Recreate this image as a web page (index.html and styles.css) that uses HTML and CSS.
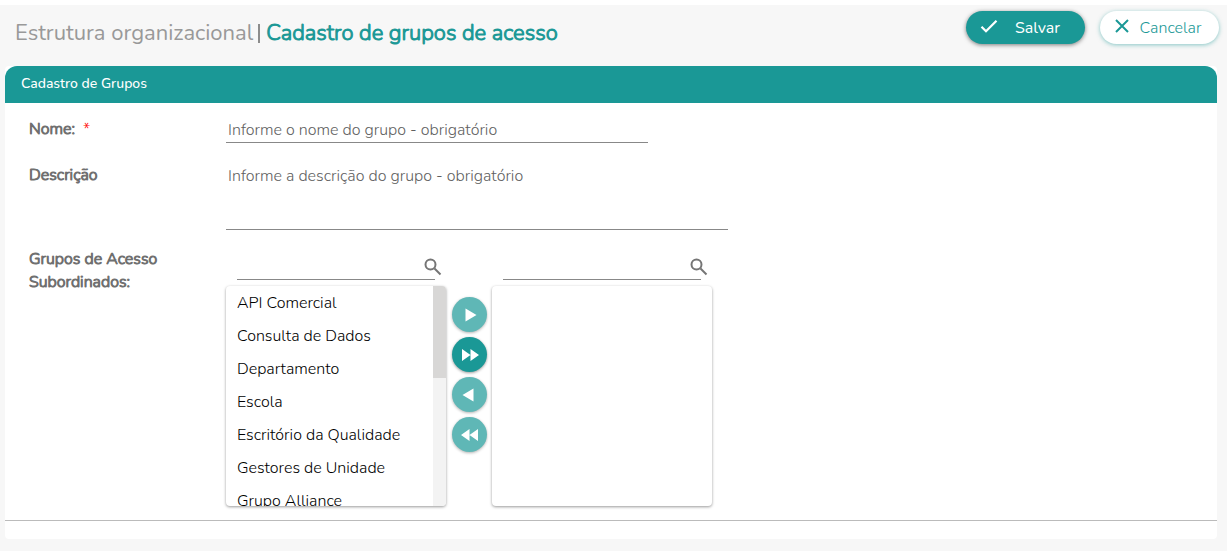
FILE: index.html
```html
<!DOCTYPE html>
<html lang="pt-BR">
<head>
<meta charset="utf-8">
<meta name="viewport" content="width=device-width, initial-scale=1">
<title>Cadastro de grupos de acesso</title>
<link rel="stylesheet" href="styles.css">
</head>
<body>
<header class="topbar">
  <h1 class="title"><span class="title-area">Estrutura organizacional</span><span class="title-sep"></span><span class="title-page">Cadastro de grupos de acesso</span></h1>
  <div class="actions">
    <button class="btn btn-primary" type="submit" form="group-form"><svg class="btn-icon" viewBox="0 0 24 24" aria-hidden="true"><path d="M2 13l6 6L22 5" /></svg><span class="btn-text">Salvar</span></button>
    <button class="btn btn-plain" type="button"><svg class="btn-icon" viewBox="0 0 24 24" aria-hidden="true"><path d="M3 3l18 18M21 3L3 21" /></svg><span class="btn-text">Cancelar</span></button>
  </div>
</header>
<main class="card">
  <h2 class="card-title">Cadastro de Grupos</h2>
  <form class="form" id="group-form">
    <div class="row row-name">
      <label class="label" for="name">Nome: <span class="required">*</span></label>
      <input class="field field-name" id="name" type="text" placeholder="Informe o nome do grupo - obrigatório">
    </div>
    <div class="row row-description">
      <label class="label" for="description">Descrição</label>
      <textarea class="field field-description" id="description" placeholder="Informe a descrição do grupo - obrigatório"></textarea>
    </div>
    <div class="row">
      <span class="label" id="groups-label">Grupos de Acesso Subordinados:</span>
      <div class="picker" role="group" aria-labelledby="groups-label">
        <div class="column">
          <div class="search"><input class="search-input" type="text" aria-label="Buscar grupos disponíveis"><svg class="search-icon" viewBox="0 0 18 18" aria-hidden="true"><circle cx="6.500" cy="6.500" r="5"/><path d="M10.500 10.500l6 6"/></svg></div>
          <div class="box">
            <ul class="list">
              <li class="item">API Comercial</li>
              <li class="item">Consulta de Dados</li>
              <li class="item">Departamento</li>
              <li class="item">Escola</li>
              <li class="item">Escritório da Qualidade</li>
              <li class="item">Gestores de Unidade</li>
              <li class="item">Grupo Alliance</li>
            </ul>
            <div class="track"><div class="thumb"></div></div>
          </div>
        </div>
        <div class="moves">
          <button class="move" type="button" aria-label="Adicionar" disabled><svg class="move-icon" viewBox="0 0 20 20"><path d="M5.500 3.500v13L16.500 10z"/></svg></button>
          <button class="move" type="button" aria-label="Adicionar todos"><svg class="move-icon" viewBox="0 0 20 20"><path d="M2 4v12l8.500-6zM10.500 4v12L19 10z"/></svg></button>
          <button class="move" type="button" aria-label="Remover" disabled><svg class="move-icon" viewBox="0 0 20 20"><path d="M13.500 3.500v13L2.500 10z"/></svg></button>
          <button class="move" type="button" aria-label="Remover todos" disabled><svg class="move-icon" viewBox="0 0 20 20"><path d="M9.500 4v12L1 10zM18 4v12L9.500 10z"/></svg></button>
        </div>
        <div class="column">
          <div class="search"><input class="search-input" type="text" aria-label="Buscar grupos selecionados"><svg class="search-icon" viewBox="0 0 18 18" aria-hidden="true"><circle cx="6.500" cy="6.500" r="5"/><path d="M10.500 10.500l6 6"/></svg></div>
          <div class="box"><ul class="list"></ul></div>
        </div>
      </div>
    </div>
  </form>
  <footer class="card-footer"></footer>
</main>
</body>
</html>
```
FILE: styles.css
```css
* { box-sizing: border-box; }
html { background: #f7f7f7; }
body {
  margin: 0;
  border-top: 5px solid #fff;
  background: #f7f7f7;
  color: #212529;
  font-family: Nunito, Lato, "Open Sans", sans-serif;
  font-size: 16px;
  font-weight: 300;
  line-height: 23px;
}
button, input, textarea { font: inherit; }
.topbar {
  display: flex;
  justify-content: space-between;
  align-items: flex-start;
  height: 61px;
  padding: 6px 8px 0 15px;
}
.title {
  display: flex;
  align-items: center;
  margin: 6px 0 0;
  font-size: 22px;
  font-weight: 400;
  line-height: 32px;
}
.title-area { color: #999; }
.title-sep { width: 2px; height: 19px; margin: 0 6px 0 5px; background: #8c8c8c; }
.title-page { color: #1a9896; font-weight: 350; -webkit-text-stroke: 1px #1a9896; }
.actions { display: flex; gap: 15px; }
.btn {
  display: flex;
  align-items: center;
  width: 119px;
  height: 33px;
  padding: 0 8px 0 14px;
  border: 0;
  border-radius: 17px;
}
.btn-icon { width: 18px; height: 18px; margin-bottom: 4px; fill: none; stroke: currentColor; stroke-width: 3; }
.btn-text { flex: 1; padding-top: 1px; text-align: center; }
.btn-primary { background: #1a9896; color: #fff; font-weight: 400; box-shadow: 0 1px 4px rgba(0, 0, 0, .5); }
.btn-plain { background: #fff; color: #1a9896; box-shadow: 0 1px 4px rgba(26, 152, 150, .5); }
.btn-plain .btn-icon { width: 16px; height: 16px; }
.card { margin: 0 10px 12px 5px; background: #fff; border-radius: 4px; }
.card-title {
  margin: 0;
  padding: 6px 16px 8px;
  border-radius: 12px 12px 0 0;
  background: #1a9896;
  color: #fff;
  font-size: 14px;
  font-weight: 500;
  line-height: 23px;
}
.form { padding: 14px 24px; }
.row { display: grid; grid-template-columns: 197px 1fr; align-items: start; }
.row-name { height: 46px; }
.row-description { height: 84px; }
.label { padding: 1px 40px 0 0; color: #707070; -webkit-text-stroke: 1px #707070; }
.required { margin-left: 4px; color: #f00; -webkit-text-stroke: 0; }
.field {
  display: block;
  padding: 2px;
  border: 0;
  border-bottom: 1px solid #888;
  border-radius: 0;
  background: transparent;
  resize: none;
}
.field::placeholder { color: #606060; opacity: 1; }
.field-name { width: 422px; height: 26px; }
.field-description { width: 502px; height: 67px; }
.picker { display: flex; align-items: flex-start; }
.column { width: 220px; }
.search { display: flex; align-items: center; height: 33px; margin-bottom: 6px; padding-left: 11px; }
.search-input {
  width: 198px;
  height: 33px;
  padding: 2px;
  border: 0;
  border-bottom: 1px solid #888;
  background: transparent;
}
.search-icon { width: 18px; height: 18px; margin: 6px 0 0 -11px; fill: none; stroke: #757575; stroke-width: 2; }
.box {
  display: flex;
  height: 220px;
  overflow: hidden;
  border-radius: 4px;
  background: #fff;
  box-shadow: 0 1px 3px rgba(0, 0, 0, .4);
}
.list { flex: 1; margin: 0; padding: 1px 0 0; overflow: hidden; list-style: none; }
.item { padding: 5px 11px; color: #000; }
.track { width: 13px; background: #f3f3f3; }
.thumb { height: 92px; background: #d8d7d6; }
.moves { display: flex; flex-direction: column; gap: 5px; padding: 50px 5px 0 6px; }
.move {
  display: grid;
  place-items: center;
  width: 35px;
  height: 35px;
  padding: 0;
  border: 0;
  border-radius: 50%;
  background: #1a9896;
  box-shadow: 0 1px 3px rgba(0, 0, 0, .4);
}
.move:disabled { background: #5fb7b6; box-shadow: 0 1px 3px rgba(0, 0, 0, .3); }
.move-icon { width: 20px; height: 20px; fill: #fff; }
.card-footer { height: 19px; border-top: 1px solid #bbb; }
```
